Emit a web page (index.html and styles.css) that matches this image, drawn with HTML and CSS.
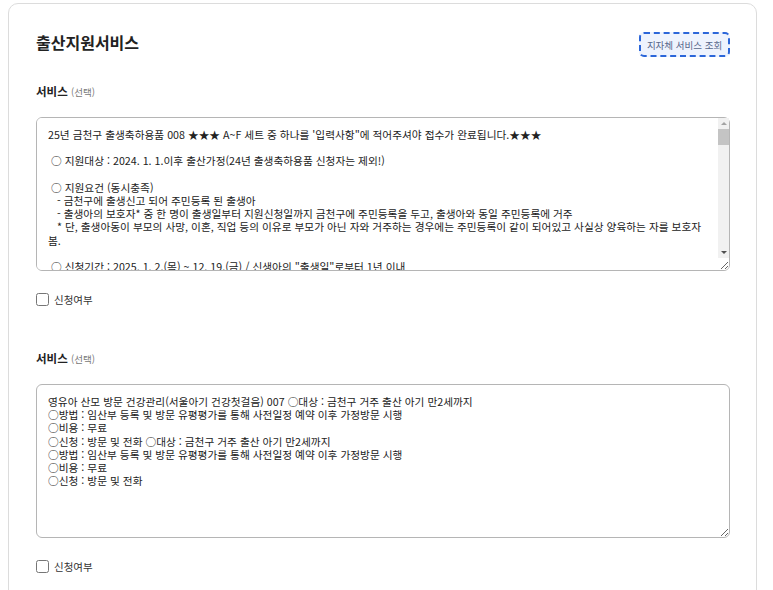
FILE: index.html
```html
<!DOCTYPE html>
<html lang="ko">
<head>
    <meta charset="UTF-8">
    <meta name="viewport" content="width=device-width, initial-scale=1.0">
    <title>출산지원서비스</title>
    <link rel="stylesheet" href="styles.css">
</head>
<body>
    <div class="card">
        <div class="card-head">
            <h2>출산지원서비스</h2>
            <button class="lookup-btn">지자체 서비스 조회</button>
        </div>

        <div class="field">
            <div class="field-label">서비스 <span class="optional">(선택)</span></div>
            <div class="text-wrap">
                <textarea class="service-text has-scroll" readonly>25년 금천구 출생축하용품 008 ★★★ A~F 세트 중 하나를 '입력사항"에 적어주셔야 접수가 완료됩니다.★★★

 ○ 지원대상 : 2024. 1. 1.이후 출산가정(24년 출생축하용품 신청자는 제외!)

 ○ 지원요건 (동시충족)
   - 금천구에 출생신고 되어 주민등록 된 출생아
   - 출생아의 보호자* 중 한 명이 출생일부터 지원신청일까지 금천구에 주민등록을 두고, 출생아와 동일 주민등록에 거주
   * 단, 출생아동이 부모의 사망, 이혼, 직업 등의 이유로 부모가 아닌 자와 거주하는 경우에는 주민등록이 같이 되어있고 사실상 양육하는 자를 보호자 봄.

 ○ 신청기간 : 2025. 1. 2.(목) ~ 12. 19.(금) / 신생아의 "출생일"로부터 1년 이내

 ○ 신청방법 : 온라인 신청(정부24) 또는 동주민센터 방문 신청

 ○ 지원내용 : 출생축하용품 1세트 (A~F 세트 중 택1)
   - A세트 : 아기 욕조, 목욕 용품
   - B세트 : 아기 내의, 손싸개, 발싸개
   - C세트 : 수유 쿠션, 가제 손수건
   - D세트 : 아기 침구 세트
   - E세트 : 턱받이, 아기 양말
   - F세트 : 아기 로션, 기저귀 크림

 ○ 배송안내 : 신청일로부터 약 2~3주 이내 택배 발송

 ○ 유의사항
   - 세트 선택 후 변경 불가
   - 주소 오기재로 인한 반송 시 재발송 불가

 ○ 문의 : 금천구청 출산지원팀</textarea>
                <!-- scrollbars are hidden in the renderer, so draw one -->
                <div class="fake-scroll">
                    <span class="arrow up"></span>
                    <span class="thumb"></span>
                    <span class="track"></span>
                    <span class="arrow down"></span>
                </div>
            </div>
            <label class="check"><input type="checkbox"> 신청여부</label>
        </div>

        <div class="field">
            <div class="field-label">서비스 <span class="optional">(선택)</span></div>
            <textarea class="service-text" readonly>영유아 산모 방문 건강관리(서울아기 건강첫걸음) 007 ○대상 : 금천구 거주 출산 아기 만2세까지
○방법 : 임산부 등록 및 방문 유평평가를 통해 사전일정 예약 이후 가정방문 시행
○비용 : 무료
○신청 : 방문 및 전화 ○대상 : 금천구 거주 출산 아기 만2세까지
○방법 : 임산부 등록 및 방문 유평평가를 통해 사전일정 예약 이후 가정방문 시행
○비용 : 무료
○신청 : 방문 및 전화</textarea>
            <label class="check"><input type="checkbox"> 신청여부</label>
        </div>
    </div>
</body>
</html>
```

FILE: styles.css
```css
body {
    margin: 0;
    background: #fff;
    font-family: "Noto Sans CJK KR", "Noto Sans", sans-serif;
    color: #222;
}
.card {
    margin: 3px 16px 0 8px;
    border: 1px solid #dcdcdc;
    border-radius: 10px;
    padding: 23px 26px 40px 27px;
}
.card-head {
    display: flex;
    justify-content: space-between;
    align-items: center;
    margin-bottom: 26px;
}
.card-head h2 {
    margin: 0;
    font-size: 16px;
    font-weight: 700;
    color: #222;
}
.lookup-btn {
    width: 91px;
    height: 25px;
    margin-top: 5px;
    padding: 0;
    border: 2px dashed #2b66d9;
    border-radius: 5px;
    background: #eef3fd;
    color: #56668a;
    font-family: inherit;
    font-size: 9.5px;
    cursor: pointer;
}
.field {
    margin-bottom: 43px;
}
.field-label {
    font-size: 11.5px;
    font-weight: 700;
    color: #222;
    margin-bottom: 18px;
}
.optional {
    font-size: 9.5px;
    font-weight: 400;
    color: #777;
}
.text-wrap {
    position: relative;
}
.service-text {
    display: block;
    box-sizing: border-box;
    width: 100%;
    height: 154px;
    padding: 10px 11px;
    border: 1px solid #b5b5b5;
    border-radius: 6px;
    font-family: inherit;
    font-size: 10.7px;
    line-height: 13.2px;
    color: #222;
    background: #fff;
    resize: vertical;
}
.has-scroll {
    padding-right: 24px;
}
.fake-scroll {
    position: absolute;
    top: 1px;
    right: 1px;
    bottom: 13px;
    width: 11px;
    display: flex;
    flex-direction: column;
    background: #f1f1f1;
    pointer-events: none;
}
.fake-scroll .track {
    flex: 1;
}
.fake-scroll .thumb {
    height: 16px;
    background: #c4c4c4;
}
.fake-scroll .arrow {
    height: 11px;
    display: flex;
    align-items: center;
    justify-content: center;
}
.fake-scroll .arrow::before {
    content: "";
    border-left: 3px solid transparent;
    border-right: 3px solid transparent;
}
.fake-scroll .up::before {
    border-bottom: 3px solid #a3a3a3;
}
.fake-scroll .down::before {
    border-top: 3px solid #505050;
}
.check {
    display: flex;
    align-items: center;
    gap: 5px;
    margin-top: 21px;
    font-size: 10.5px;
    color: #333;
}
.check input {
    width: 13px;
    height: 13px;
    margin: 0;
}
```
